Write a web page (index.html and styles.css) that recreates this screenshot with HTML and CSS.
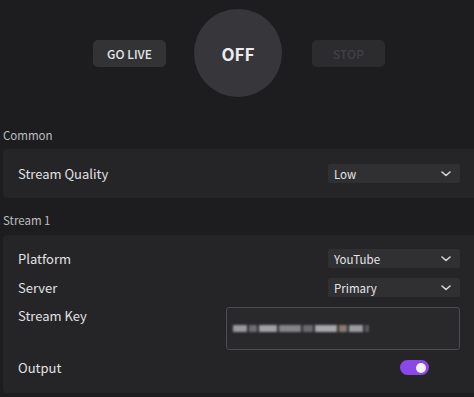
FILE: index.html
```html
<!DOCTYPE html>
<html>
<head>
<meta charset="utf-8">
<link rel="stylesheet" href="styles.css">
</head>
<body>
<div class="page">
  <div class="controls">
    <button class="btn">GO LIVE</button>
    <div class="state">OFF</div>
    <button class="btn disabled">STOP</button>
  </div>

  <div class="section-label">Common</div>
  <div class="card card-common">
    <div class="row">
      <span class="label">Stream Quality</span>
      <div class="select"><span>Low</span><svg class="chev" viewBox="0 0 10 6" width="10" height="6"><path d="M1 1 L5 4.5 L9 1" fill="none" stroke="#d8d8dc" stroke-width="1.6" stroke-linecap="round" stroke-linejoin="round"/></svg></div>
    </div>
  </div>

  <div class="section-label second">Stream 1</div>
  <div class="card card-stream">
    <div class="row">
      <span class="label">Platform</span>
      <div class="select"><span>YouTube</span><svg class="chev" viewBox="0 0 10 6" width="10" height="6"><path d="M1 1 L5 4.5 L9 1" fill="none" stroke="#d8d8dc" stroke-width="1.6" stroke-linecap="round" stroke-linejoin="round"/></svg></div>
    </div>
    <div class="row">
      <span class="label">Server</span>
      <div class="select"><span>Primary</span><svg class="chev" viewBox="0 0 10 6" width="10" height="6"><path d="M1 1 L5 4.5 L9 1" fill="none" stroke="#d8d8dc" stroke-width="1.6" stroke-linecap="round" stroke-linejoin="round"/></svg></div>
    </div>
    <div class="row row-key">
      <span class="label">Stream Key</span>
      <div class="keybox">
        <div class="blur">
          <i class="b1"></i><i class="b2"></i><i class="b3"></i><i class="b4"></i><i class="b5"></i><i class="b6"></i><i class="b7"></i><i class="b8"></i><i class="b9"></i>
        </div>
      </div>
    </div>
    <div class="row row-output">
      <span class="label">Output</span>
      <div class="toggle"><span class="knob"></span></div>
    </div>
  </div>
</div>
</body>
</html>
```

FILE: styles.css
```css
html, body {
  margin: 0;
  padding: 0;
  background: #1d1d1f;
  overflow: hidden;
}
body {
  font-family: "Noto Sans CJK SC", "Noto Sans", sans-serif;
  color: #e2e2e4;
  width: 474px;
  height: 397px;
}
.page {
  display: flex;
  flex-direction: column;
}
.controls {
  display: flex;
  align-items: center;
  justify-content: center;
  height: 88px;
  padding-top: 9px;
  padding-bottom: 10px;
  padding-left: 4px;
  gap: 28px;
}
.btn {
  width: 73px;
  height: 27px;
  border: none;
  border-radius: 5px;
  background: #333336;
  color: #e6e6e8;
  font-family: inherit;
  font-size: 12px;
  font-weight: 500;
  padding: 0;
  line-height: 27px;
}
.btn.disabled {
  color: #404044;
  background: #2c2c2f;
  margin-left: 2px;
}
.state {
  width: 88px;
  height: 88px;
  border-radius: 50%;
  background: #37373b;
  display: flex;
  align-items: center;
  justify-content: center;
  font-size: 17px;
  font-weight: 700;
  color: #ececee;
}
.section-label {
  font-size: 11.5px;
  color: #bdbdc0;
  padding-left: 3px;
  height: 16px;
  line-height: 16px;
  margin-top: 20px;
  margin-bottom: 6px;
}
.section-label.second {
  margin-top: 14px;
  margin-bottom: 7px;
}
.card {
  background: #252528;
  border-radius: 4px;
  margin-left: 3px;
  margin-right: -6px;
  padding: 15px 20px 15px 15px;
  display: flex;
  flex-direction: column;
}
.card-stream {
  padding-top: 14px;
  padding-bottom: 18px;
}
.row {
  display: flex;
  align-items: center;
  justify-content: space-between;
  height: 19px;
}
.card-stream .row + .row {
  margin-top: 10px;
}
.label {
  font-size: 13px;
  color: #e2e2e4;
}
.select {
  width: 132px;
  height: 19px;
  box-sizing: border-box;
  background: #303033;
  border-radius: 2px;
  display: flex;
  align-items: center;
  justify-content: space-between;
  padding: 0 9px 0 6px;
  font-size: 11.5px;
  color: #e6e6e8;
}
.chev {
  display: block;
}
.row-key {
  height: 43px;
  align-items: flex-start;
}
.card-stream .row-key {
  margin-top: 9px;
}
.row-key .label {
  line-height: 18px;
}
.keybox {
  width: 234px;
  height: 43px;
  box-sizing: border-box;
  border: 1px solid #4d4d51;
  border-radius: 3px;
  background: #29292c;
  display: flex;
  align-items: center;
  padding-left: 6px;
}
.blur {
  display: flex;
  align-items: center;
  gap: 2px;
  filter: blur(1px);
  height: 8px;
}
.blur i {
  display: block;
  height: 7px;
  background: #8a8a8e;
}
.blur .b1 { width: 14px; background: #9a9a9e; }
.blur .b2 { width: 8px; background: #6e6e72; }
.blur .b3 { width: 18px; background: #a2a2a6; }
.blur .b4 { width: 22px; background: #858589; }
.blur .b5 { width: 10px; background: #6a6a6e; }
.blur .b6 { width: 22px; background: #a8a8ac; }
.blur .b7 { width: 8px; background: #8a7a72; }
.blur .b8 { width: 14px; background: #9c9ca0; }
.blur .b9 { width: 4px; background: #5a5a5e; }
.row-output {
  height: 15px;
}
.card-stream .row-output {
  margin-top: 10px;
}
.toggle {
  width: 29px;
  height: 15px;
  border-radius: 8px;
  background: #8a48e6;
  margin-right: 31px;
  display: flex;
  align-items: center;
  justify-content: flex-end;
  padding-right: 3px;
  box-sizing: border-box;
}
.knob {
  width: 10px;
  height: 10px;
  border-radius: 50%;
  background: #f4f0fa;
}
```
